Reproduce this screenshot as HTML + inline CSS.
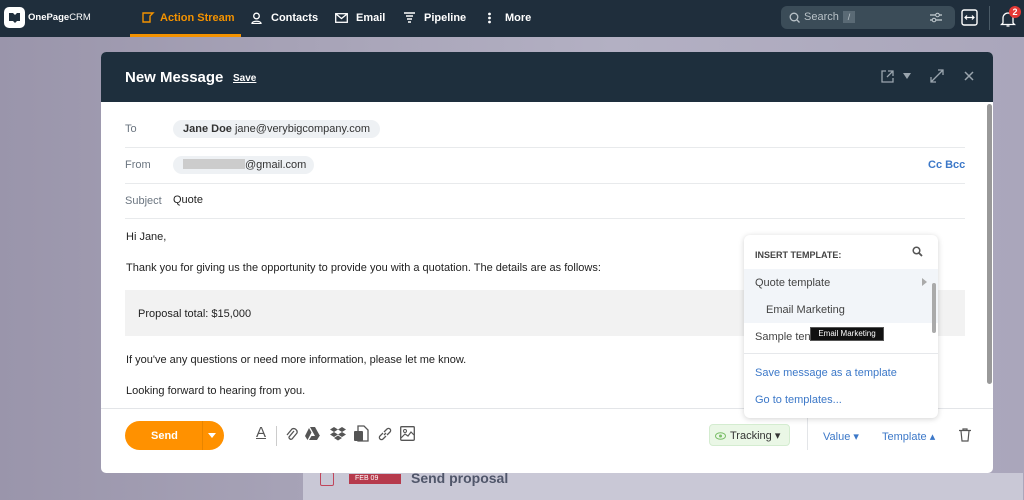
<!DOCTYPE html>
<html><head><meta charset="utf-8"><style>
*{box-sizing:border-box;margin:0;padding:0}
body{width:1024px;height:500px;overflow:hidden;font-family:"Liberation Sans",sans-serif;background:linear-gradient(90deg,#9a95ab 0%,#a7a3b7 30%,#b3b0c3 60%,#aaa6bb 100%);position:relative}
.nav{position:absolute;left:0;top:0;width:1024px;height:37px;background:#1f2e3c;color:#fff;font-size:11px;font-weight:bold}
.nav .it{position:absolute;top:12px;white-space:nowrap}
.abs{position:absolute;white-space:nowrap}
.modal{position:absolute;left:101px;top:52px;width:892px;height:421px;background:#fff;border-radius:5px;overflow:hidden}
.mh{height:50px;background:#1e2f3d;position:relative}
.lbl{position:absolute;left:24px;color:#6b7580;font-size:11px}
.pill{position:absolute;left:72px;height:18px;border-radius:9px;background:#eef1f4;font-size:11px;color:#333;padding:3px 10px;line-height:12px;white-space:nowrap}
.hr{position:absolute;left:24px;right:28px;height:1px;background:#e8eaec}
.txt{position:absolute;left:25px;font-size:11px;color:#222;white-space:nowrap}
.blue{color:#3c78c8}
</style></head><body>
<div class="nav">
 <div class="abs" style="left:4px;top:7px;width:21px;height:21px;background:#fff;border-radius:5px"><svg width="21" height="21"><path d="M5 6h4l2 2v8l-2-2H5z M16 6h-3l-2 2v8l2-2h3z" fill="#1f2e3c"/></svg></div>
 <div class="abs" style="left:28px;top:12px;font-size:9.5px">OnePage<span style="font-weight:normal">CRM</span></div>
 <svg class="abs" style="left:142px;top:12px" width="13" height="11"><path d="M1 1h10l-3 3v6H1z" fill="none" stroke="#f39200" stroke-width="1.4"/></svg>
 <div class="it" style="left:160px;color:#f39200">Action Stream</div>
 <div class="abs" style="left:130px;top:34px;width:111px;height:3px;background:#f39200"></div>
 <svg class="abs" style="left:251px;top:12px" width="11" height="12"><circle cx="5.5" cy="4" r="2.8" fill="none" stroke="#fff" stroke-width="1.3"/><path d="M1 11.5c0-3 9-3 9 0z" fill="none" stroke="#fff" stroke-width="1.3"/></svg>
 <div class="it" style="left:271px">Contacts</div>
 <svg class="abs" style="left:335px;top:13px" width="13" height="10"><rect x=".7" y=".7" width="11.6" height="8.6" fill="none" stroke="#fff" stroke-width="1.3"/><path d="M1 1l5.5 4.5L12 1" fill="none" stroke="#fff" stroke-width="1.3"/></svg>
 <div class="it" style="left:356px">Email</div>
 <svg class="abs" style="left:404px;top:12px" width="11" height="12"><path d="M0 1h11M2 4h7M3 7h5M4 10h3" stroke="#fff" stroke-width="1.6"/></svg>
 <div class="it" style="left:424px">Pipeline</div>
 <svg class="abs" style="left:487px;top:12px" width="5" height="12"><circle cx="2.5" cy="2" r="1.4" fill="#fff"/><circle cx="2.5" cy="6" r="1.4" fill="#fff"/><circle cx="2.5" cy="10" r="1.4" fill="#fff"/></svg>
 <div class="it" style="left:505px">More</div>
 <div class="abs" style="left:781px;top:6px;width:174px;height:23px;background:#3b4c58;border-radius:6px;font-weight:normal;color:#b9c2c8;font-size:11px">
  <svg class="abs" style="left:8px;top:6px" width="11" height="11"><circle cx="5" cy="5" r="3.8" fill="none" stroke="#b9c2c8" stroke-width="1.3"/><path d="M8 8l2.5 2.5" stroke="#b9c2c8" stroke-width="1.3"/></svg>
  <span class="abs" style="left:23px;top:5px">Search</span>
  <span class="abs" style="left:62px;top:5px;width:12px;height:12px;background:#5a6a75;font-size:9px;text-align:center;line-height:12px">/</span>
  <svg class="abs" style="left:149px;top:6px" width="12" height="11"><path d="M0 3h12M0 8h12" stroke="#c6ced3" stroke-width="1.2"/><circle cx="7.5" cy="3" r="1.8" fill="#3b4c58" stroke="#c6ced3"/><circle cx="4" cy="8" r="1.8" fill="#3b4c58" stroke="#c6ced3"/></svg>
 </div>
 <svg class="abs" style="left:961px;top:9px" width="17" height="17"><rect x="1" y="1" width="15" height="15" rx="2" fill="none" stroke="#fff" stroke-width="1.4"/><path d="M4 8.5h9M6 6.5l-2 2 2 2M11 6.5l2 2-2 2" fill="none" stroke="#fff" stroke-width="1.2"/></svg>
 <div class="abs" style="left:989px;top:6px;width:1px;height:24px;background:#4a5a66"></div>
 <svg class="abs" style="left:1000px;top:10px" width="16" height="18"><path d="M3 13V8a5 5 0 0110 0v5l1.5 1.5h-13z M6.5 16h3" fill="none" stroke="#fff" stroke-width="1.3"/></svg>
 <div class="abs" style="left:1009px;top:6px;width:12px;height:12px;border-radius:6px;background:#e53935;font-size:9px;text-align:center;line-height:12px">2</div>
</div>

<div class="abs" style="left:303px;top:473px;width:720px;height:27px;background:#c9c8d6"></div>
<div class="abs" style="left:320px;top:472px;width:14px;height:14px;border:1.5px solid #c0455a;border-radius:2px"></div>
<div class="abs" style="left:349px;top:474px;width:52px;height:10px;background:#b63a4c;color:#fff;font-size:7px;padding-left:6px;line-height:10px">FEB 09</div>
<div class="abs" style="left:411px;top:470px;font-size:14px;font-weight:bold;color:#50566a">Send proposal</div>

<div class="modal">
 <div class="mh">
  <div class="abs" style="left:24px;top:17px;color:#fff;font-size:15px;font-weight:bold">New Message</div>
  <div class="abs" style="left:132px;top:21px;color:#fff;font-size:10px;font-weight:bold;text-decoration:underline">Save</div>
  <svg class="abs" style="left:780px;top:18px" width="13" height="13"><path d="M5 1H1v11h11V8M7 1h5v5M12 1L6 7" fill="none" stroke="#9aa5ae" stroke-width="1.3"/></svg>
  <svg class="abs" style="left:802px;top:21px" width="8" height="6"><path d="M0 0h8L4 6z" fill="#9aa5ae"/></svg>
  <svg class="abs" style="left:829px;top:17px" width="14" height="14"><path d="M1 13L13 1M8 1h5v5M1 8v5h5" fill="none" stroke="#9aa5ae" stroke-width="1.3"/></svg>
  <svg class="abs" style="left:863px;top:19px" width="10" height="10"><path d="M1 1l8 8M9 1L1 9" stroke="#9aa5ae" stroke-width="1.5"/></svg>
 </div>
 <div class="lbl" style="top:71px">To</div>
 <div class="pill" style="top:68px"><b>Jane Doe</b> jane@verybigcompany.com</div>
 <div class="hr" style="top:95px"></div>
 <div class="lbl" style="top:107px">From</div>
 <div class="pill" style="top:104px;width:141px"><span style="display:inline-block;width:62px;height:10px;background:#ccc;vertical-align:-1px"></span>@gmail.com</div>
 <div class="abs blue" style="left:827px;top:107px;font-size:11px;font-weight:bold">Cc Bcc</div>
 <div class="hr" style="top:131px"></div>
 <div class="lbl" style="top:143px">Subject</div>
 <div class="abs" style="left:72px;top:142px;font-size:11px;color:#222">Quote</div>
 <div class="hr" style="top:166px"></div>
 <div class="txt" style="top:179px">Hi Jane,</div>
 <div class="txt" style="top:210px">Thank you for giving us the opportunity to provide you with a quotation. The details are as follows:</div>
 <div class="abs" style="left:24px;top:238px;width:840px;height:46px;background:#f2f2f2"></div>
 <div class="txt" style="left:37px;top:256px">Proposal total: $15,000</div>
 <div class="txt" style="top:302px">If you've any questions or need more information, please let me know.</div>
 <div class="txt" style="top:333px">Looking forward to hearing from you.</div>
 <div class="abs" style="left:885px;top:50px;width:7px;height:307px"><div style="margin:0 auto;width:5px;height:280px;background:#999;border-radius:3px;margin-top:2px"></div></div>
 <div class="abs" style="left:0;top:356px;width:892px;height:1px;background:#e3e5e8"></div>
 <div class="abs" style="left:24px;top:369px;width:99px;height:29px;background:#ff9100;border-radius:15px;color:#fff;font-size:11px;font-weight:bold"><span class="abs" style="left:26px;top:9px">Send</span><div class="abs" style="left:77px;top:0;width:1px;height:29px;background:#e88500"></div><svg class="abs" style="left:83px;top:12px" width="8" height="5"><path d="M0 0h8L4 5z" fill="#fff"/></svg></div>
 <div class="abs" style="left:155px;top:372px;font-size:15px;color:#555;text-decoration:underline">A</div>
 <div class="abs" style="left:175px;top:374px;width:1px;height:20px;background:#ccc"></div>
 <svg class="abs" style="left:183px;top:374px" width="14" height="16"><path d="M10 5l-5 6a2 2 0 003 2l5-6a3.5 3.5 0 00-5-4l-5 6" fill="none" stroke="#555" stroke-width="1.3"/></svg>
 <svg class="abs" style="left:204px;top:375px" width="15" height="13"><path d="M5 0h5l5 9h-5zM4 1l2.5 4.5L2.5 13 0 9zM4 13l2.5-4h8l-2.5 4z" fill="#555"/></svg>
 <svg class="abs" style="left:229px;top:375px" width="16" height="14"><path d="M4 0l4 2.5L4 5 0 2.5zM12 0l4 2.5L12 5 8 2.5zM4 5l4 2.5L4 10 0 7.5zM12 5l4 2.5-4 2.5-4-2.5zM4 11l4-2.5 4 2.5-4 2.5z" fill="#555"/></svg>
 <svg class="abs" style="left:252px;top:373px" width="16" height="18"><path d="M5 1h6l4 4v11H5z" fill="none" stroke="#555" stroke-width="1.3"/><rect x="1" y="6" width="9" height="10" rx="1" fill="#555"/></svg>
 <svg class="abs" style="left:277px;top:375px" width="14" height="14"><path d="M6 8l2-2M5 6L2 9a2 2 0 003 3l3-3M9 8l3-3a2 2 0 00-3-3L6 5" fill="none" stroke="#555" stroke-width="1.3"/></svg>
 <svg class="abs" style="left:299px;top:374px" width="15" height="15"><rect x=".7" y=".7" width="13.6" height="13.6" rx="1" fill="none" stroke="#555" stroke-width="1.3"/><circle cx="5" cy="5" r="1.5" fill="none" stroke="#555"/><path d="M1 12l4-4 3 2 3-4 3 3" fill="none" stroke="#555" stroke-width="1.2"/></svg>
 <div class="abs" style="left:608px;top:372px;width:81px;height:22px;background:#eaf7e6;border:1px solid #d4ecd0;border-radius:4px;font-size:11px;color:#333;padding:4px 0 0 20px">Tracking ▾</div>
 <svg class="abs" style="left:614px;top:380px" width="11" height="8"><ellipse cx="5.5" cy="4" rx="5" ry="3.3" fill="none" stroke="#7cbf6a"/><circle cx="5.5" cy="4" r="1.5" fill="#7cbf6a"/></svg>
 <div class="abs" style="left:706px;top:366px;width:1px;height:32px;background:#e3e5e8"></div>
 <div class="abs blue" style="left:722px;top:378px;font-size:11px">Value ▾</div>
 <div class="abs blue" style="left:781px;top:378px;font-size:11px">Template ▴</div>
 <svg class="abs" style="left:858px;top:376px" width="12" height="14"><path d="M0 2.5h12M4 2.5V1h4v1.5M2 3l1 10h6l1-10" fill="none" stroke="#555" stroke-width="1.2"/></svg>
</div>

<div class="abs" style="left:744px;top:235px;width:194px;height:183px;background:#fff;border-radius:6px;box-shadow:0 1px 6px rgba(0,0,0,.18)">
 <div class="abs" style="left:11px;top:15px;font-size:9px;font-weight:bold;color:#444">INSERT TEMPLATE:</div>
 <svg class="abs" style="left:168px;top:11px" width="11" height="11"><circle cx="4.5" cy="4.5" r="3.3" fill="none" stroke="#555" stroke-width="1.5"/><path d="M7 7l3 3" stroke="#555" stroke-width="1.8"/></svg>
 <div class="abs" style="left:0;top:34px;width:194px;height:54px;background:#f2f5f9"></div>
 <div class="abs" style="left:11px;top:42px;font-size:11px;color:#444">Quote template</div>
 <svg class="abs" style="left:178px;top:43px" width="5" height="8"><path d="M0 0l5 4-5 4z" fill="#aaa"/></svg>
 <div class="abs" style="left:22px;top:69px;font-size:11px;color:#444">Email Marketing</div>
 <div class="abs" style="left:11px;top:96px;font-size:11px;color:#444">Sample ten</div>
 <div class="abs" style="left:188px;top:34px;width:5px;height:80px"><div style="width:4px;height:50px;margin-top:14px;background:#aaa;border-radius:2px"></div></div>
 <div class="abs" style="left:0;top:118px;width:194px;height:1px;background:#e6e8eb"></div>
 <div class="abs blue" style="left:11px;top:132px;font-size:11px">Save message as a template</div>
 <div class="abs blue" style="left:11px;top:159px;font-size:11px">Go to templates...</div>
</div>
<div class="abs" style="left:810px;top:327px;width:74px;height:14px;background:#111;border:1px solid #555;color:#fff;font-size:8px;line-height:12px;text-align:center">Email Marketing</div>
</body></html>
